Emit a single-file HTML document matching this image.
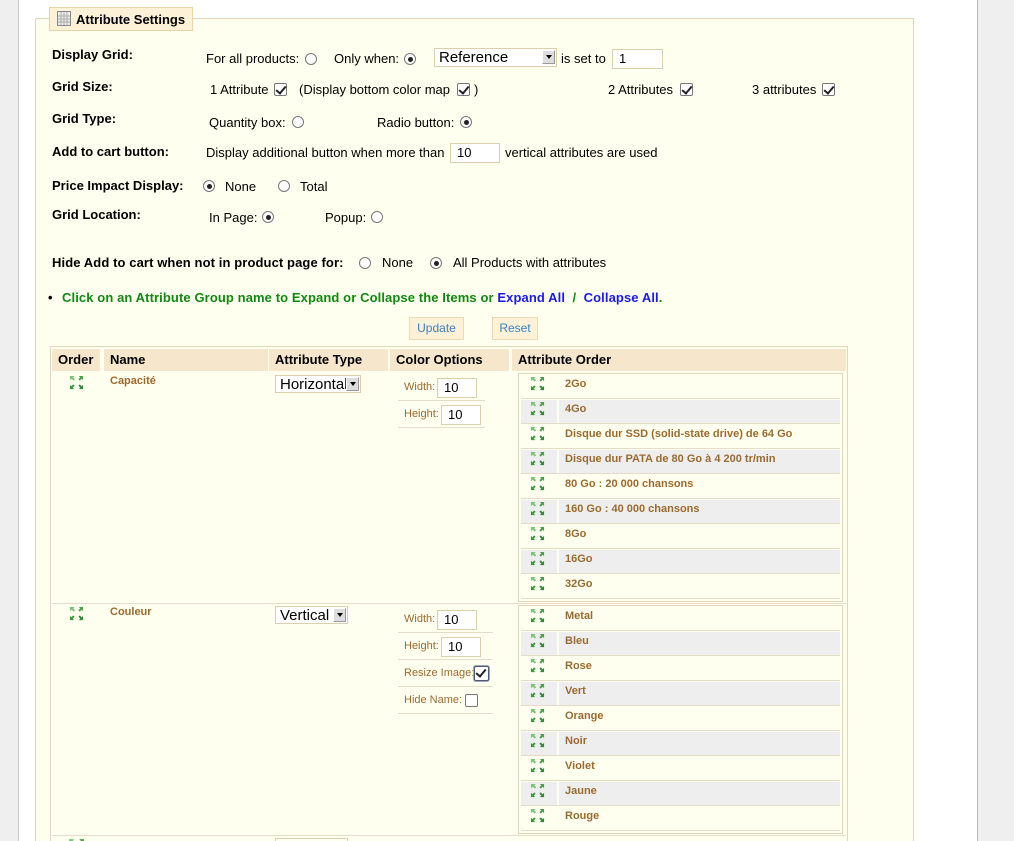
<!DOCTYPE html>
<html><head><meta charset="utf-8"><style>
*{margin:0;padding:0;box-sizing:border-box}
html,body{width:1014px;height:841px;overflow:hidden}
body{background:#fff;font-family:"Liberation Sans",sans-serif;font-size:13px;color:#000;position:relative}
#w{position:absolute;left:0;top:0;width:1014px;height:841px;overflow:hidden}
.a{position:absolute;white-space:nowrap}
.b{font-weight:bold}
.r{position:absolute;width:12px;height:12px;border:1px solid #777;border-radius:50%;background:#fff}
.r.on::after{content:"";position:absolute;left:2.5px;top:2.5px;width:5px;height:5px;border-radius:50%;background:#222}
.c{position:absolute;width:13px;height:13px;border:1px solid #777;background:#fff;border-radius:2px}
.c.on::after{content:"";position:absolute;left:3px;top:0px;width:4px;height:8px;border:solid #222;border-width:0 2px 2px 0;transform:rotate(40deg)}
.in{position:absolute;border:1px solid #dccfae;background:#fff;font-size:13px;padding-left:6px;line-height:18px}
.sel{position:absolute;border:1px solid #dccfae;background:#fff;font-size:15px;padding-left:4px;line-height:18px}
.sel i{position:absolute;right:1px;top:1px;width:13px;height:14px;background:#ddd;border:1px solid #999;border-top-color:#fff;border-left-color:#fff}
.sel i::after{content:"";position:absolute;left:3px;top:4px;border:3px solid transparent;border-top:4px solid #000}
.hd{position:absolute;top:349px;height:22px;background:#f5e6cc;font-weight:bold;font-size:13px;line-height:22px;padding-left:6px}
.br{color:#9a6b2e;font-weight:bold;font-size:11px}
.lbl{color:#9a6b2e;font-size:11px}
.sep{position:absolute;height:1px;background:#e4dcc8}
.ic{position:absolute;width:17px;height:15px}
</style></head><body><div id="w">
<div class="a" style="left:0;top:0;width:19px;height:841px;background:#efefef;border-right:1px solid #ccc"></div>
<div class="a" style="left:977px;top:0;width:37px;height:841px;background:#efefef;border-left:1px solid #bbb"></div>
<div class="a" style="left:35px;top:18px;width:879px;height:823px;background:#fffff0;border:1px solid #e2d6b8;border-bottom:0"></div>
<div class="a" style="left:49px;top:7px;width:144px;height:24px;background:#fdf2d8;border:1px solid #e6d3a8"></div>
<svg class="a" style="left:57px;top:11px" width="14" height="15"><rect x="0.5" y="0.5" width="13" height="14" fill="#eee" stroke="#888"/><path d="M4 1v13M7 1v13M10 1v13M1 5h12M1 8h12M1 11h12" stroke="#aaa"/></svg>
<div class="a b" style="left:76px;top:12px">Attribute Settings</div>

<div class="a b" style="left:52px;top:47px">Display Grid:</div>
<div class="a" style="left:206px;top:51px">For all products:</div><div class="r" style="left:305px;top:53px"></div>
<div class="a" style="left:334px;top:51px">Only when:</div><div class="r on" style="left:404px;top:53px"></div>
<div class="sel" style="left:434px;top:48px;width:123px;height:19px">Reference<i></i></div>
<div class="a" style="left:561px;top:51px">is set to</div>
<div class="in" style="left:612px;top:49px;width:51px;height:20px">1</div>

<div class="a b" style="left:52px;top:79px">Grid Size:</div>
<div class="a" style="left:210px;top:82px">1 Attribute</div><div class="c on" style="left:274px;top:83px"></div>
<div class="a" style="left:299px;top:82px">(Display bottom color map</div><div class="c on" style="left:457px;top:83px"></div><div class="a" style="left:474px;top:82px">)</div>
<div class="a" style="left:608px;top:82px">2 Attributes</div><div class="c on" style="left:680px;top:83px"></div>
<div class="a" style="left:752px;top:82px">3 attributes</div><div class="c on" style="left:822px;top:83px"></div>

<div class="a b" style="left:52px;top:111px">Grid Type:</div>
<div class="a" style="left:209px;top:115px">Quantity box:</div><div class="r" style="left:292px;top:116px"></div>
<div class="a" style="left:377px;top:115px">Radio button:</div><div class="r on" style="left:460px;top:116px"></div>

<div class="a b" style="left:52px;top:144px">Add to cart button:</div>
<div class="a" style="left:206px;top:145px">Display additional button when more than</div>
<div class="in" style="left:450px;top:143px;width:50px;height:20px">10</div>
<div class="a" style="left:505px;top:145px">vertical attributes are used</div>

<div class="a b" style="left:52px;top:178px">Price Impact Display:</div>
<div class="r on" style="left:203px;top:180px"></div><div class="a" style="left:225px;top:179px">None</div>
<div class="r" style="left:278px;top:180px"></div><div class="a" style="left:300px;top:179px">Total</div>

<div class="a b" style="left:52px;top:207px">Grid Location:</div>
<div class="a" style="left:209px;top:210px">In Page:</div><div class="r on" style="left:262px;top:211px"></div>
<div class="a" style="left:325px;top:210px">Popup:</div><div class="r" style="left:371px;top:211px"></div>

<div class="a b" style="left:52px;top:255px;letter-spacing:0.1px">Hide Add to cart when not in product page for:</div>
<div class="r" style="left:359px;top:257px"></div><div class="a" style="left:382px;top:255px">None</div>
<div class="r on" style="left:430px;top:257px"></div><div class="a" style="left:453px;top:255px">All Products with attributes</div>

<div class="a b" style="left:48px;top:290px;font-size:13px">•</div>
<div class="a b" style="left:62px;top:290px;color:#118811;letter-spacing:0.1px">Click on an Attribute Group name to Expand or Collapse the Items or <span style="color:#1a1aee">Expand All</span>&nbsp; / &nbsp;<span style="color:#1a1aee">Collapse All</span>.</div>

<div class="a" style="left:409px;top:317px;width:55px;height:23px;background:#fdf2d8;border:1px solid #eadbb5;color:#3a7fc0;font-size:12px;text-align:center;line-height:21px">Update</div>
<div class="a" style="left:492px;top:317px;width:46px;height:23px;background:#fdf2d8;border:1px solid #eadbb5;color:#3a7fc0;font-size:12px;text-align:center;line-height:21px">Reset</div>

<div class="a" style="left:50px;top:346px;width:798px;height:495px;border:1px solid #e2d6b8;border-bottom:0"></div>
<div class="hd" style="left:52px;width:48px">Order</div>
<div class="hd" style="left:104px;width:164px">Name</div>
<div class="hd" style="left:269px;width:119px">Attribute Type</div>
<div class="hd" style="left:390px;width:119px">Color Options</div>
<div class="hd" style="left:512px;width:334px">Attribute Order</div>

<svg width="0" height="0" style="position:absolute"><defs><g id="ar"><path d="M1 1h5l-1.5 1.5 2 2-1.5 1.5-2-2L1 5.5z" fill="#7ac47a"/><path d="M15 1v4.5l-1.5-1.5-2 2-1.5-1.5 2-2L10.5 1z" fill="#4a9f4a"/><path d="M1 15v-4.5l1.5 1.5 2-2 1.5 1.5-2 2L5.5 15z" fill="#3a9a3a"/><path d="M15 15h-4.5l1.5-1.5-2-2 1.5-1.5 2 2 1.5-1.5z" fill="#2f8a3a"/></g></defs></svg>

<svg class="ic" style="left:68px;top:375px" viewBox="0 0 16 16"><use href="#ar"/></svg>
<div class="a br" style="left:110px;top:375px">Capacité</div>
<div class="sel" style="left:275px;top:375px;width:86px;height:18px">Horizontal<i></i></div>
<div class="a lbl" style="left:404px;top:381px">Width:</div><div class="in" style="left:437px;top:378px;width:40px;height:20px">10</div>
<div class="sep" style="left:398px;top:400px;width:87px"></div>
<div class="a lbl" style="left:404px;top:408px">Height:</div><div class="in" style="left:441px;top:405px;width:40px;height:20px">10</div>
<div class="sep" style="left:398px;top:427px;width:87px"></div>

<div class="sep" style="left:52px;top:603px;width:794px"></div>
<svg class="ic" style="left:68px;top:606px" viewBox="0 0 16 16"><use href="#ar"/></svg>
<div class="a br" style="left:110px;top:606px">Couleur</div>
<div class="sel" style="left:275px;top:606px;width:73px;height:18px">Vertical<i></i></div>
<div class="a lbl" style="left:404px;top:613px">Width:</div><div class="in" style="left:437px;top:610px;width:40px;height:20px">10</div>
<div class="sep" style="left:398px;top:632px;width:95px"></div>
<div class="a lbl" style="left:404px;top:640px">Height:</div><div class="in" style="left:441px;top:637px;width:40px;height:20px">10</div>
<div class="sep" style="left:398px;top:659px;width:95px"></div>
<div class="a lbl" style="left:404px;top:667px">Resize Image:</div><div class="c on" style="left:474px;top:666px;width:15px;height:15px;border-color:#557;box-shadow:0 0 0 1px #9ab"></div>
<div class="sep" style="left:398px;top:686px;width:95px"></div>
<div class="a lbl" style="left:404px;top:694px">Hide Name:</div><div class="c" style="left:465px;top:694px"></div>
<div class="sep" style="left:398px;top:713px;width:95px"></div>
<div class="sep" style="left:52px;top:835px;width:794px"></div>
<svg class="ic" style="left:68px;top:838px;height:3px" viewBox="0 0 16 3" preserveAspectRatio="xMinYMin slice"><use href="#ar"/></svg>
<div class="a" style="left:275px;top:838px;width:73px;height:3px;border:1px solid #dccfae;border-bottom:0"></div>

<div id="ao"></div>
<script>
function box(top,items){
  var h='<div class="a" style="left:518px;top:'+top+'px;width:325px;height:'+(items.length*25+4)+'px;border:1px solid #e2d6b8"></div>';
  items.forEach(function(t,i){
    var y=top+2+i*25, g=i%2==1?'#eeeeee':'transparent';
    h+='<div class="a" style="left:521px;top:'+y+'px;width:36px;height:23px;background:'+g+'"></div>';
    h+='<div class="a" style="left:559px;top:'+y+'px;width:281px;height:23px;background:'+g+'"></div>';
    h+='<div class="sep" style="left:521px;top:'+(y+23)+'px;width:319px"></div>';
    h+='<svg class="ic" style="left:529px;top:'+(y+1)+'px" viewBox="0 0 16 16"><use href="#ar"/></svg>';
    h+='<div class="a br" style="left:565px;top:'+(y+3)+'px">'+t+'</div>';
  });
  return h;
}
document.getElementById('ao').innerHTML=box(373,["2Go","4Go","Disque dur SSD (solid-state drive) de 64 Go","Disque dur PATA de 80 Go à 4 200 tr/min","80 Go : 20 000 chansons","160 Go : 40 000 chansons","8Go","16Go","32Go"])+box(605,["Metal","Bleu","Rose","Vert","Orange","Noir","Violet","Jaune","Rouge"]);
</script>
</div></body></html>
